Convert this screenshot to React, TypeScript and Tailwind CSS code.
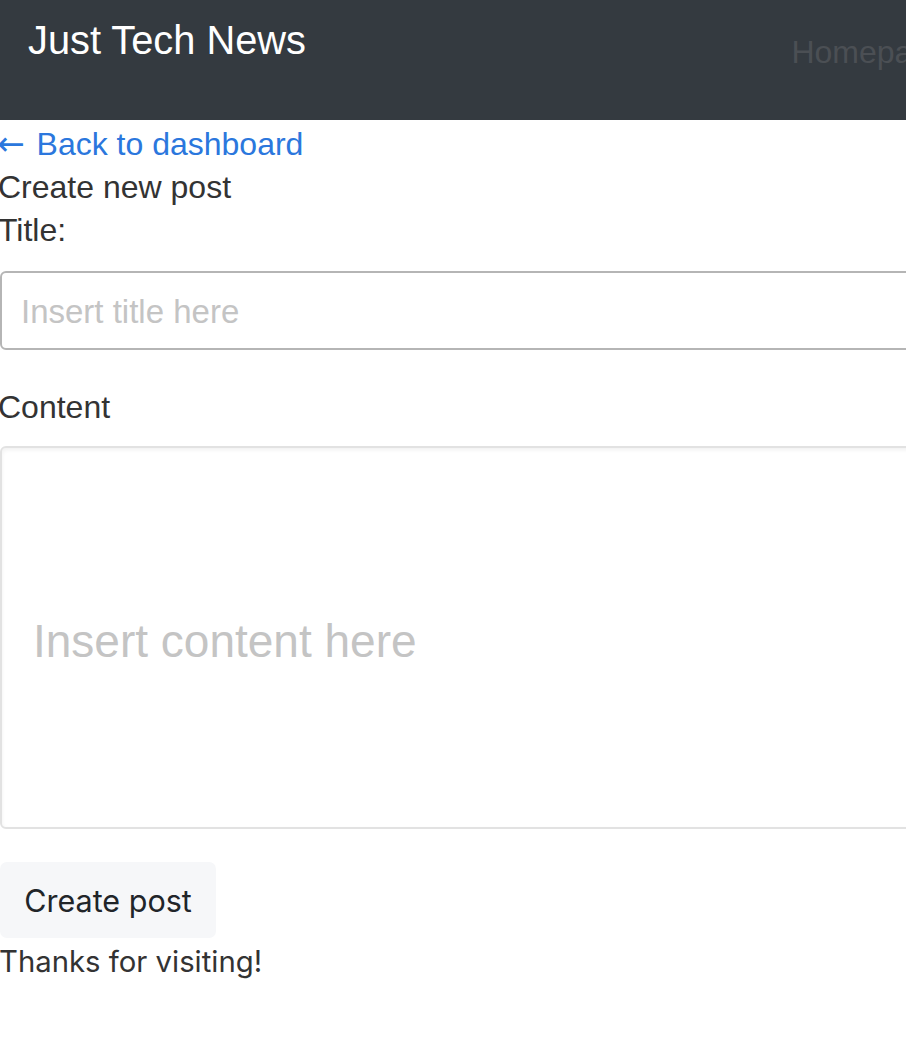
export default function App() {
  return (
    <div className="w-[906px] h-[1046px] overflow-hidden bg-white font-['Liberation_Sans',Arial,sans-serif] text-[#333]">
      <header className="h-[120px] bg-[#343a40] flex items-start">
        <h1 className="ml-[28px] mt-[17px] text-[39.8px] leading-[46px] text-white">Just Tech News</h1>
        <nav className="ml-auto mt-[30px] -mr-[42px]">
          <a href="#" className="text-[32px] leading-[44px] text-[#4b4f54]">Homepage</a>
        </nav>
      </header>

      <main className="-ml-[2px] text-[32px] leading-[43px]">
        <a href="#" className="block -ml-[1px] text-[#2b77dd] pt-[2px]">
          <span className="font-['DejaVu_Sans',sans-serif] text-[33px] mr-[3px]">←</span> Back to dashboard
        </a>
        <h2>Create new post</h2>
        <form className="flex flex-col">
          <label htmlFor="title">Title:</label>
          <input
            id="title"
            type="text"
            placeholder="Insert title here"
            className="ml-[2px] mt-[19px] w-[1000px] h-[79px] rounded-[6px] border-2 border-[#b5b5b5] px-[19px] pt-[3px] text-[33px] placeholder:text-[#c4c4c4] outline-none"
          />
          <label htmlFor="content" className="mt-[36px]">Content</label>
          <textarea
            id="content"
            placeholder="Insert content here"
            className="ml-[2px] mt-[17px] w-[1000px] h-[383px] rounded-[6px] border-2 border-[#e2e2e2] shadow-[inset_0_2px_4px_rgba(0,0,0,0.06)] px-[31px] pt-[165px] text-[46px] leading-[56px] resize-none placeholder:text-[#c4c4c4] outline-none"
          />
          <div className="ml-[2px] mt-[33px]">
            <button
              type="button"
              className="w-[216px] h-[76px] rounded-[7px] bg-[#f6f7f9] text-[30.5px] text-[#212529] font-['Inter',sans-serif]"
            >
              Create post
            </button>
          </div>
        </form>
        <footer className="ml-[1px] font-['Inter',sans-serif] text-[29.3px] leading-[48px] text-[#333]">Thanks for visiting!</footer>
      </main>
    </div>
  )
}
